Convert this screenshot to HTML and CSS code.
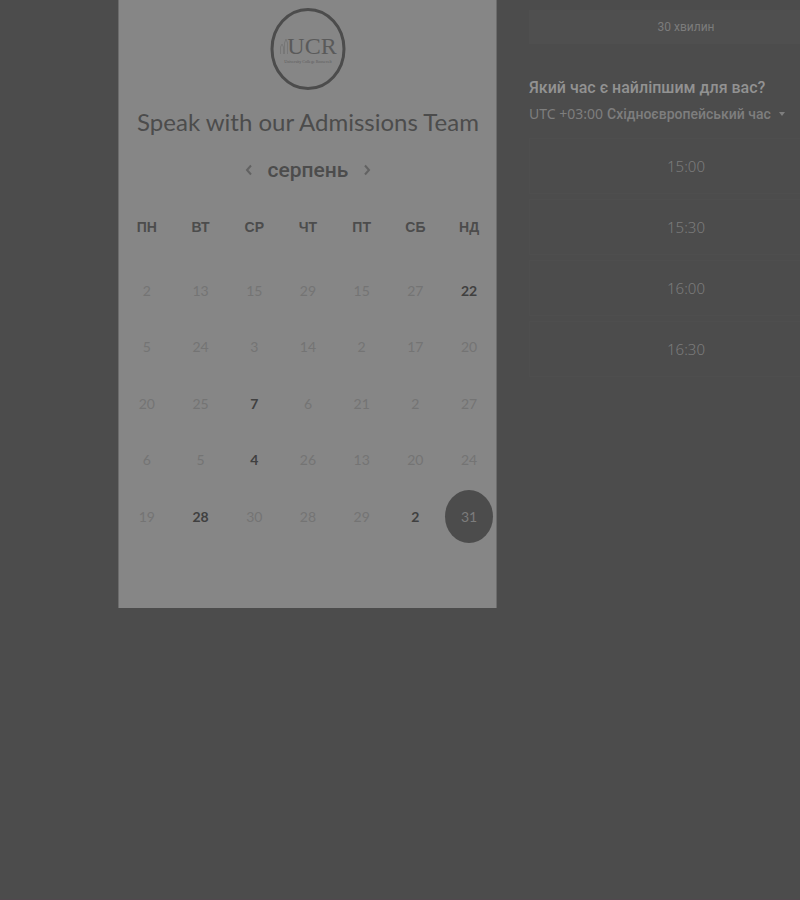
FILE: index.html
```html
<!DOCTYPE html>
<html lang="uk">
<head>
<meta charset="utf-8">
<meta name="viewport" content="width=device-width, initial-scale=1">
<title>Speak with our Admissions Team</title>
<link rel="stylesheet" href="styles.css">
</head>
<body>
<main class="scheduler">
  <section class="calendar">
    <svg class="logo" viewBox="0 0 76 84" role="img" aria-label="UCR">
      <ellipse cx="38" cy="42" rx="36" ry="39.5" fill="none" stroke="#4c4c4c" stroke-width="3"/>
      <path d="M10.500 47v-7l1.500-3 1.500 3v7M14.500 47V36l1.500-4 1.500 4v11" fill="none" stroke="#777" stroke-width="1"/>
      <text class="logo-name" x="42" y="47" text-anchor="middle">UCR</text>
      <text class="logo-sub" x="38" y="56" text-anchor="middle">University College Roosevelt</text>
    </svg>
    <h1 class="title">Speak with our Admissions Team</h1>
    <div class="month">
      <button class="arrow" type="button" aria-label="Попередній місяць"><svg viewBox="0 0 8 12"><path d="M6 1.500 2 6l4 4.500"/></svg></button>
      <h2 class="month-name">серпень</h2>
      <button class="arrow" type="button" aria-label="Наступний місяць"><svg viewBox="0 0 8 12"><path d="M2 1.500 6 6l-4 4.500"/></svg></button>
    </div>
    <table class="days">
      <thead>
        <tr><th>ПН</th><th>ВТ</th><th>СР</th><th>ЧТ</th><th>ПТ</th><th>СБ</th><th>НД</th></tr>
      </thead>
      <tbody>
        <tr><td>2</td><td>13</td><td>15</td><td>29</td><td>15</td><td>27</td><td><button class="day" type="button">22</button></td></tr>
        <tr><td>5</td><td>24</td><td>3</td><td>14</td><td>2</td><td>17</td><td>20</td></tr>
        <tr><td>20</td><td>25</td><td><button class="day" type="button">7</button></td><td>6</td><td>21</td><td>2</td><td>27</td></tr>
        <tr><td>6</td><td>5</td><td><button class="day" type="button">4</button></td><td>26</td><td>13</td><td>20</td><td>24</td></tr>
        <tr><td>19</td><td><button class="day" type="button">28</button></td><td>30</td><td>28</td><td>29</td><td><button class="day" type="button">2</button></td><td><button class="day selected" type="button">31</button></td></tr>
      </tbody>
    </table>
  </section>
  <section class="times">
    <button class="duration" type="button">30 хвилин</button>
    <h2 class="question">Який час є найліпшим для вас?</h2>
    <button class="zone" type="button"><span class="offset">UTC +03:00</span> <b>Східноєвропейський час</b><svg class="caret" viewBox="0 0 6 4"><path d="M0 0h6L3 4z"/></svg></button>
    <div class="slots">
      <button class="slot" type="button">15:00</button>
      <button class="slot" type="button">15:30</button>
      <button class="slot" type="button">16:00</button>
      <button class="slot" type="button">16:30</button>
    </div>
  </section>
</main>
</body>
</html>
```
FILE: styles.css
```css
* { box-sizing: border-box; }

body {
  margin: 0;
  min-height: 100vh;
  overflow: hidden;
  background: #4c4c4c;
  border-bottom: 1px solid #51484e;
  font-family: Lato, "Liberation Sans", sans-serif;
  color: #4c4c4c;
}

button {
  padding: 0;
  border: 0;
  background: none;
  color: inherit;
  font: inherit;
  cursor: pointer;
}

h1, h2 { margin: 0; }

.scheduler {
  display: grid;
  grid-template-columns: minmax(0, 118fr) minmax(0, 379fr) minmax(0, 303fr);
  align-items: start;
}

.calendar {
  grid-column: 2;
  display: flex;
  flex-direction: column;
  align-items: center;
  padding: 7px 0 64px 1px;
  background: #868686;
  border-left: 1px solid #6c6c6c;
  border-right: 1px solid #6c6c6c;
}

.logo { width: 76px; height: 84px; }
.logo-name { font: 24px "Liberation Serif", serif; fill: #5a5a5a; }
.logo-sub { font: 4px "Liberation Serif", serif; fill: #5c5c5c; }

.title {
  margin-top: 15px;
  font-size: 24px;
  font-weight: 400;
  line-height: 32px;
  white-space: nowrap;
}

.month {
  display: flex;
  align-items: center;
  gap: 15px;
  margin-top: 17px;
}

.month-name {
  font: 500 21px/30px Roboto, "Liberation Sans", sans-serif;
}

.arrow { width: 8px; height: 12px; }
.arrow svg { display: block; fill: none; stroke: #626262; stroke-width: 2; }

.days {
  width: 100%;
  margin-top: 15px;
  border-collapse: collapse;
  table-layout: fixed;
  text-align: center;
}

.days th {
  height: 62px;
  padding: 0 0 8px;
  font: bold 14px "Liberation Sans", sans-serif;
}

.days td {
  height: 56px;
  padding: 0;
  font-size: 14px;
  color: #747474;
}

.days tr:nth-child(even) td { height: 57px; }

.day { color: #404040; font-weight: 700; }

.selected {
  width: 48px;
  height: 53px;
  border-radius: 50%;
  background: #4c4c4c;
  color: #7c7c7c;
  font-weight: 400;
}

.times {
  display: flex;
  flex-direction: column;
  align-items: flex-start;
  width: 314px;
  margin: 10px 0 0 32px;
}

.duration {
  width: 100%;
  height: 34px;
  background: #4f4f4f;
  color: #7c7c7c;
  font: 12px Roboto, "Liberation Sans", sans-serif;
}

.question {
  margin-top: 32px;
  font: 500 16px/24px Roboto, "Liberation Sans", sans-serif;
  color: #929292;
}

.zone {
  display: flex;
  align-items: center;
  gap: 4px;
  margin-top: 4px;
  font: 14px/20px Roboto, "Liberation Sans", sans-serif;
  color: #7e7e7e;
  white-space: nowrap;
}

.zone b { font-weight: 500; }
.offset { font-family: "Noto Sans", sans-serif; }
.caret { width: 6px; height: 4px; margin-left: 4px; fill: #7e7e7e; }

.slots {
  display: grid;
  gap: 5px;
  width: 100%;
  margin-top: 14px;
}

.slot {
  height: 56px;
  border: 1px solid #4e4e4e;
  color: #7c7c7c;
  font-family: "Noto Sans", sans-serif;
  font-size: 15px;
  font-weight: 300;
}
```
